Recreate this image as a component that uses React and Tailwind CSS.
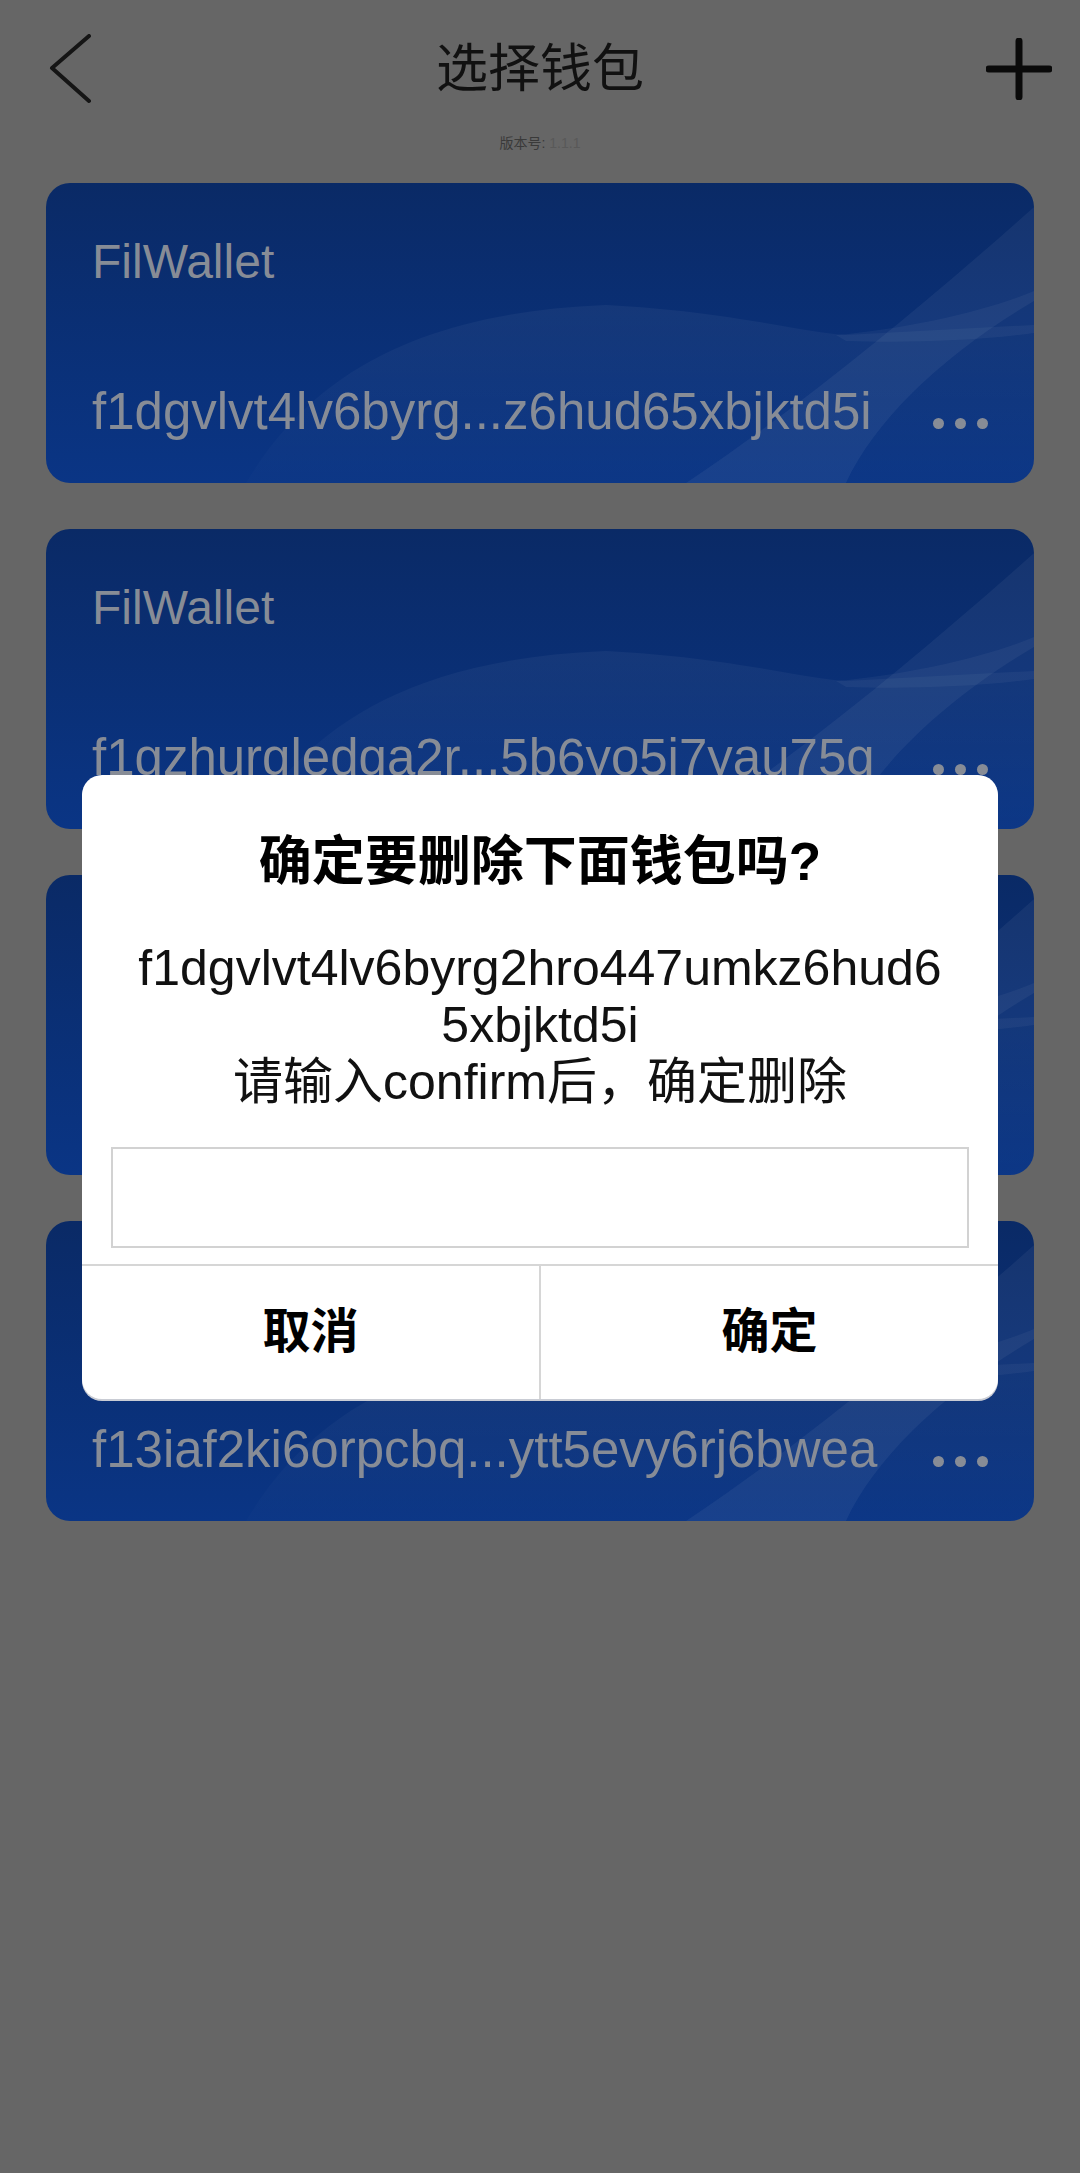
import React from 'react';

const wallets = [
  { name: 'FilWallet', addr: 'f1dgvlvt4lv6byrg...z6hud65xbjktd5i' },
  { name: 'FilWallet', addr: 'f1gzhurgledga2r...5b6yo5i7yau75g' },
  { name: 'FilWallet', addr: 'f1k3xw7pqmzrd2e...h4nu2ac6lt3vbqe' },
  { name: 'FilWallet', addr: 'f13iaf2ki6orpcbq...ytt5evy6rj6bwea' },
];

function CardWaves() {
  return (
    <svg className="absolute inset-0 h-full w-full" viewBox="0 0 988 300" preserveAspectRatio="none">
      <defs>
        <linearGradient id="soft" x1="0" y1="0" x2="0" y2="1">
          <stop offset="0" stopColor="#ffffff" stopOpacity="0.045" />
          <stop offset="1" stopColor="#ffffff" stopOpacity="0.01" />
        </linearGradient>
      </defs>
      <path d="M200,300 C260,200 360,130 560,122 C680,128 760,150 800,152 L988,142 L988,300 Z" fill="url(#soft)" />
      <path d="M640,300 C760,220 880,120 988,24 L988,118 C900,170 830,235 800,300 Z" fill="#ffffff" fillOpacity="0.05" />
      <path d="M790,152 C860,146 940,128 988,108 L988,150 C930,158 860,160 800,158 Z" fill="#ffffff" fillOpacity="0.045" />
    </svg>
  );
}

function WalletCard({ w }) {
  return (
    <div className="relative h-[300px] overflow-hidden rounded-[24px] bg-linear-to-b from-[#0a2a66] to-[#0a3585]">
      <CardWaves />
      <div className="relative flex h-full flex-col px-[46px] pt-[55px]">
        <div className="text-[48px] leading-[48px] text-[#878c96]">{w.name}</div>
        <div className="mt-[100px] flex items-end justify-between">
          <div className="text-[51px] leading-[51px] text-[#878c96] whitespace-nowrap">{w.addr}</div>
          <div className="mb-[8px] flex gap-[11px]">
            <span className="h-[11px] w-[11px] rounded-full bg-[#878c96]" />
            <span className="h-[11px] w-[11px] rounded-full bg-[#878c96]" />
            <span className="h-[11px] w-[11px] rounded-full bg-[#878c96]" />
          </div>
        </div>
      </div>
    </div>
  );
}

export default function App() {
  return (
    <div className="relative h-[2173px] w-[1080px] overflow-hidden bg-[#666666] font-['Liberation_Sans','Noto_Sans_CJK_SC',sans-serif]">
      {/* header */}
      <div className="mt-[35px] flex h-[68px] items-center">
        <div className="flex w-[200px] pl-[47px]">
          <svg width="46" height="70" viewBox="0 0 46 70">
            <polyline points="42,2 5,34 42,67" fill="none" stroke="#151515" strokeWidth="4" strokeLinecap="round" strokeLinejoin="round" />
          </svg>
        </div>
        <div className="flex-1 text-center text-[52px] leading-[60px] text-[#111111]">选择钱包</div>
        <div className="flex w-[200px] justify-end pr-[28px]">
          <svg width="66" height="62" viewBox="0 0 66 62">
            <line x1="3" y1="31" x2="63" y2="31" stroke="#0a0a0a" strokeWidth="7" strokeLinecap="round" />
            <line x1="33" y1="3" x2="33" y2="59" stroke="#0a0a0a" strokeWidth="7" strokeLinecap="round" />
          </svg>
        </div>
      </div>
      <div className="mt-[30px] h-[20px] text-center text-[14px] leading-[20px]">
        <span className="text-[#3a3a3a]">版本号: </span>
        <span className="text-[#595959]">1.1.1</span>
      </div>

      {/* wallet list */}
      <div className="mx-[46px] mt-[30px] flex flex-col gap-[46px]">
        {wallets.map((w, i) => (
          <WalletCard key={i} w={w} />
        ))}
      </div>

      {/* delete dialog */}
      <div className="absolute inset-0 flex items-center justify-center">
        <div className="w-[916px] overflow-hidden rounded-[20px] bg-white shadow-[0_2px_0_#c9ccd4]">
          <div className="pt-[57px] text-center text-[53px] font-bold leading-[60px] text-black">确定要删除下面钱包吗?</div>
          <div className="mt-[48px] text-center text-[50px] leading-[57px] text-[#111111]">
            f1dgvlvt4lv6byrg2hro447umkz6hud6
            <br />
            5xbjktd5i
            <br />
            请输入confirm后，确定删除
          </div>
          <div className="mx-[29px] mt-[36px] h-[101px] border-2 border-[#d2d2d2]" />
          <div className="mt-[16px] flex h-[135px] border-t-2 border-[#d6d6d6]">
            <div className="flex flex-1 items-center justify-center border-r-2 border-[#d6d6d6] text-[48px] font-bold text-black">取消</div>
            <div className="flex flex-1 items-center justify-center text-[48px] font-bold text-black">确定</div>
          </div>
        </div>
      </div>
    </div>
  );
}
